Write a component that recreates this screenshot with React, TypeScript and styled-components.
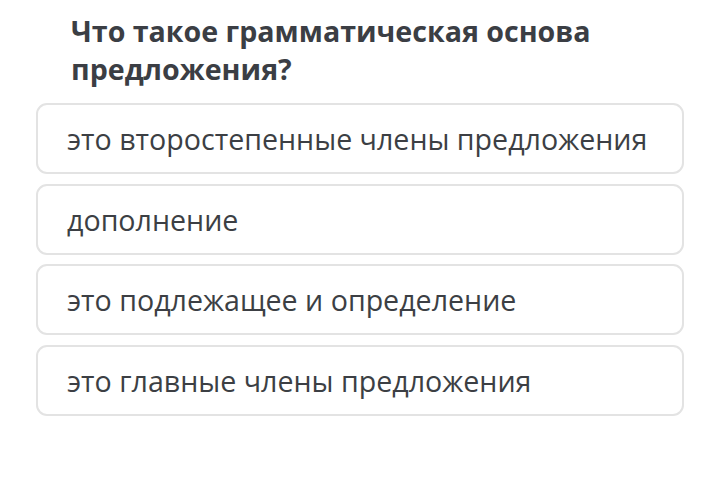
import React from "react";
import styled, { createGlobalStyle } from "styled-components";

const Global = createGlobalStyle`
  html, body { margin: 0; padding: 0; background: #ffffff; }
  body { font-family: "Open Sans", "Noto Sans", sans-serif; }
`;

const Page = styled.div`
  width: 720px;
  height: 481px;
  box-sizing: border-box;
  padding: 12px 36px 0 36px;
  display: flex;
  flex-direction: column;
`;

const Question = styled.h2`
  margin: 0 0 15px 35px;
  font-size: 28.6px;
  line-height: 38px;
  font-weight: 700;
  color: #3b3e44;
`;

const List = styled.div`
  display: flex;
  flex-direction: column;
  gap: 9.5px;
`;

const Option = styled.div`
  height: 71px;
  box-sizing: border-box;
  border: 2px solid #e3e3e3;
  border-radius: 11px;
  display: flex;
  align-items: center;
  padding: 0 29px;
  font-size: 28.6px;
  color: #3c3f44;
`;

const options = [
  "это второстепенные члены предложения",
  "дополнение",
  "это подлежащее и определение",
  "это главные члены предложения",
];

export default function App() {
  return (
    <>
      <Global />
      <Page>
        <Question>
          Что такое грамматическая основа
          <br />
          предложения?
        </Question>
        <List>
          {options.map((o) => (
            <Option key={o}>{o}</Option>
          ))}
        </List>
      </Page>
    </>
  );
}
